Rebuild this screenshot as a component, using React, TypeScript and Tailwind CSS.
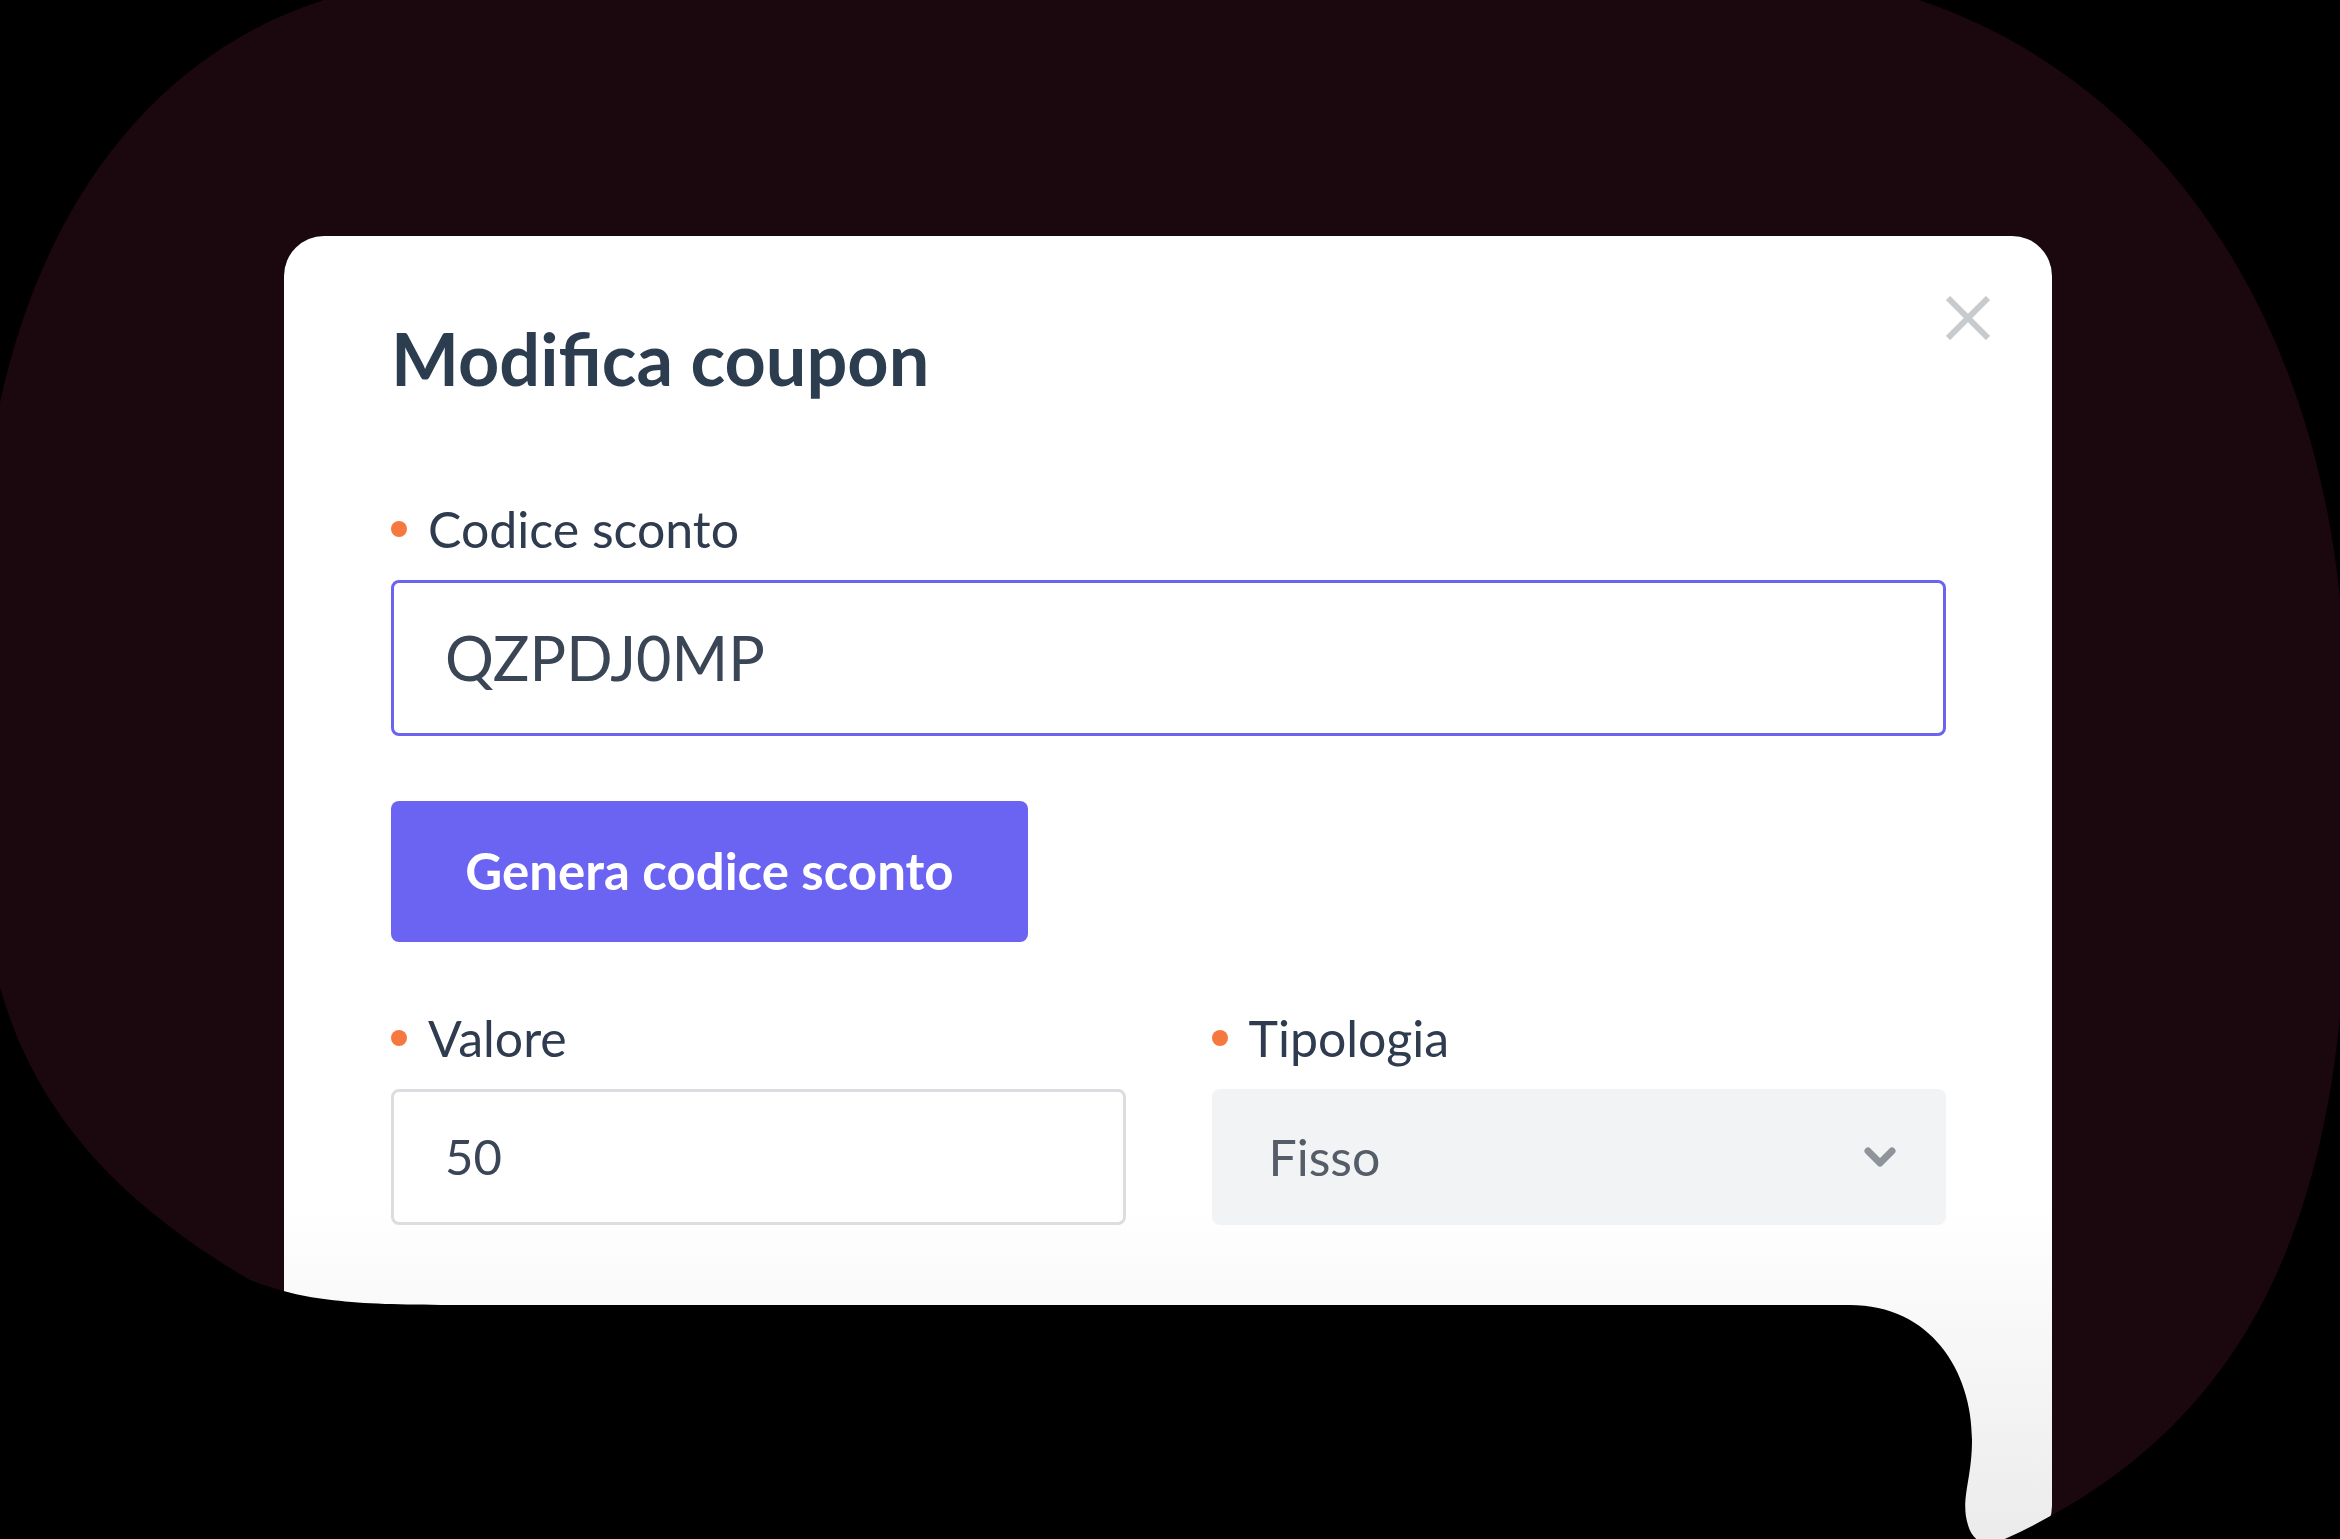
import { ChevronDown } from "lucide-react";

const font = "font-['Lato','Noto_Sans',sans-serif]";

function Label({ text, required = true }: { text: string; required?: boolean }) {
    return (
        <div className="flex h-[48px] items-center gap-[21px] text-[50px] leading-[48px] text-[#2f3b4e]">
            {required && <span className="h-[16px] w-[16px] shrink-0 rounded-full bg-[#f5793f]" />}
            <span>{text}</span>
        </div>
    );
}

export default function App() {
    return (
        <div className={`relative h-[1539px] w-full overflow-hidden bg-black ${font}`}>
            {/* speech bubble mask */}
            <svg className="absolute h-0 w-0" aria-hidden>
                <defs>
                    <clipPath id="bubble" clipPathUnits="userSpaceOnUse">
                        <path d="M430 -20 L1760 -30 C2120 -10 2345 300 2345 700 L2345 950 C2330 1250 2230 1440 1998 1542 C1985 1548 1972 1540 1968 1525 C1960 1500 1972 1480 1972 1440 C1972 1370 1930 1305 1850 1305 L450 1305 C350 1305 300 1300 250 1280 C80 1180 -10 1060 -20 860 L-20 600 C-20 250 150 0 430 -20 Z" />
                    </clipPath>
                </defs>
            </svg>

            <div className="h-full w-full bg-[#1b070e] pl-[284px] pt-[236px] [clip-path:url(#bubble)]">
                <div className="relative h-[1310px] w-[1768px] rounded-[40px] bg-linear-to-b from-white from-[74%] to-[#ebebeb] pl-[107px] pr-[106px] pt-[87px]">
                    <button className="absolute right-[62px] top-[60px]">
                        <svg width="44" height="44" viewBox="0 0 44 44">
                            <path d="M2 2 L42 42 M42 2 L2 42" stroke="#c8cbcd" strokeWidth="6" />
                        </svg>
                    </button>

                    <h2 className="h-[70px] text-[72px] font-bold leading-[70px] text-[#2d3d50]">Modifica coupon</h2>

                    <div className="mt-[112px]">
                        <Label text="Codice sconto" />
                    </div>
                    <div className="mt-[27px] flex h-[156px] items-center rounded-[8px] border-[3px] border-[#6c63ee] pl-[51px] text-[61px] text-[#3a4656]">
                        QZPDJ0MP
                    </div>

                    <button className="mt-[65px] flex h-[141px] w-[637px] items-center justify-center rounded-[8px] bg-[#6b64f2] text-[51px] font-bold text-white">
                        Genera codice sconto
                    </button>

                    <div className="mt-[72px] grid grid-cols-2 gap-x-[86px]">
                        <div>
                            <Label text="Valore" />
                            <div className="mt-[27px] flex h-[136px] items-center rounded-[8px] border-[3px] border-[#dcdde0] bg-white pl-[51px] text-[49px] text-[#3a4656]">
                                50
                            </div>
                        </div>
                        <div>
                            <Label text="Tipologia" />
                            <div className="mt-[27px] flex h-[136px] items-center justify-between rounded-[8px] bg-[#f1f3f5] pl-[57px] pr-[42px] text-[50px] text-[#555d69]">
                                <span>Fisso</span>
                                <ChevronDown size={48} strokeWidth={3.5} className="text-[#8f949b]" />
                            </div>
                        </div>
                    </div>

                    <div className="mt-[74px]">
                        <Label text="Descrizione" required={false} />
                    </div>
                </div>
            </div>
        </div>
    );
}
